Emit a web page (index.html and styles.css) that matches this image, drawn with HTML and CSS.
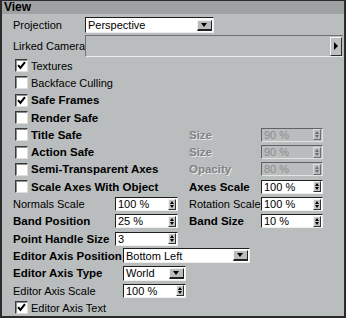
FILE: index.html
```html
<!DOCTYPE html>
<html lang="en">
<head>
    <meta charset="UTF-8">
    <title>View</title>
    <link rel="stylesheet" href="styles.css">
</head>
<body>
<div class="panel">
    <div class="title">View</div>
    <div class="body">
        <!-- Camera -->
        <div class="row top">
            <span class="lab-a">Projection</span>
            <div class="select proj"><span>Perspective</span><i class="drop"></i></div>
        </div>
        <div class="row linked">
            <span class="lab-a">Lirked Camera</span>
            <div class="link"><i class="go"></i></div>
        </div>

        <!-- Toggles -->
        <div class="row cb">
            <span class="box"><svg viewBox="0 0 10 10"><path d="M1.2 4.6 L3.8 7.6 L8.8 1.2"/></svg></span>
            <span>Textures</span>
        </div>
        <div class="row cb">
            <span class="box"></span>
            <span>Backface Culling</span>
        </div>
        <div class="row cb b">
            <span class="box"><svg viewBox="0 0 10 10"><path d="M1.2 4.6 L3.8 7.6 L8.8 1.2"/></svg></span>
            <span>Safe Frames</span>
        </div>
        <div class="row cb b">
            <span class="box"></span>
            <span>Render Safe</span>
        </div>
        <div class="row cb b">
            <div class="cb-left"><span class="box"></span><span>Title Safe</span></div>
            <span class="rlab off">Size</span>
            <div class="num off"><span>90 %</span><i class="spin"></i></div>
        </div>
        <div class="row cb b">
            <div class="cb-left"><span class="box"></span><span>Action Safe</span></div>
            <span class="rlab off">Size</span>
            <div class="num off"><span>90 %</span><i class="spin"></i></div>
        </div>
        <div class="row cb b">
            <div class="cb-left"><span class="box"></span><span>Semi-Transparent Axes</span></div>
            <span class="rlab off">Opacity</span>
            <div class="num off"><span>80 %</span><i class="spin"></i></div>
        </div>
        <div class="row cb b">
            <div class="cb-left"><span class="box"></span><span>Scale Axes With Object</span></div>
            <span class="rlab">Axes Scale</span>
            <div class="num"><span>100 %</span><i class="spin"></i></div>
        </div>

        <!-- Sizes -->
        <div class="row">
            <span class="lab-n">Normals Scale</span>
            <div class="num sm"><span>100 %</span><i class="spin"></i></div>
            <span class="rlab">Rotation Scale</span>
            <div class="num"><span>100 %</span><i class="spin"></i></div>
        </div>
        <div class="row b">
            <span class="lab-n">Band Position</span>
            <div class="num sm"><span>25 %</span><i class="spin"></i></div>
            <span class="rlab">Band Size</span>
            <div class="num"><span>10 %</span><i class="spin"></i></div>
        </div>
        <div class="row b">
            <span class="lab-n">Point Handle Size</span>
            <div class="num sm"><span>3</span><i class="spin"></i></div>
        </div>

        <!-- Editor axis -->
        <div class="row b">
            <span class="lab-e">Editor Axis Position</span>
            <div class="select pos"><span>Bottom Left</span><i class="drop"></i></div>
        </div>
        <div class="row b">
            <span class="lab-e">Editor Axis Type</span>
            <div class="select type"><span>World</span><i class="drop"></i></div>
        </div>
        <div class="row">
            <span class="lab-e">Editor Axis Scale</span>
            <div class="num ed"><span>100 %</span><i class="spin"></i></div>
        </div>
        <div class="row cb">
            <span class="box"><svg viewBox="0 0 10 10"><path d="M1.2 4.6 L3.8 7.6 L8.8 1.2"/></svg></span>
            <span>Editor Axis Text</span>
        </div>
    </div>
</div>
</body>
</html>
```

FILE: styles.css
```css
/* Base */
body {
    margin: 0;
    background: #fff;
    font-family: "Liberation Sans", Arial, sans-serif;
    font-size: 11px;
    color: #000;
}
.panel {
    width: 342px;
    height: 315px;
    border: solid #2b2b2b;
    border-width: 1px 2px 2px 2px;
    background: #b9bdbd;
}
.title {
    height: 13px;
    line-height: 13px;
    padding-left: 2px;
    background: #9ea2a2;
    font-weight: bold;
    font-size: 12px;
}
.body {
    padding-top: 3px;
}

/* Rows */
.row {
    display: flex;
    align-items: center;
    height: 17.3px;
    padding-left: 11px;
    white-space: nowrap;
}
.row.b {
    font-weight: bold;
    font-size: 11.5px;
}
.row.cb {
    padding-left: 13px;
}
.row.top {
    height: 16px;
}
.row.linked {
    height: 22px;
    margin-top: 2px;
}
.lab-a {
    width: 72px;
}
.lab-n {
    width: 102px;
}
.lab-e {
    width: 110px;
}
.cb-left {
    display: flex;
    align-items: center;
    width: 174px;
}
.rlab {
    width: 72px;
}
.rlab.off {
    color: #7f8383;
    text-shadow: 1px 1px 0 #e6e8e8;
}

/* Checkbox */
.box {
    box-sizing: border-box;
    width: 13px;
    height: 13px;
    margin-right: 3px;
    padding: 1px;
    background: #fff;
    border: 1px solid;
    border-color: #3a3a3a #dcdede #dcdede #3a3a3a;
    box-shadow: inset 1px 1px 0 #8a8e8e;
}
.box svg {
    display: block;
    width: 9px;
    height: 9px;
    fill: none;
    stroke: #000;
    stroke-width: 2.3;
}

/* Number fields */
.num {
    box-sizing: border-box;
    display: flex;
    align-items: center;
    justify-content: space-between;
    width: 62px;
    height: 14px;
    padding: 0 1px 0 2px;
    background: #fff;
    border: 1px solid;
    border-color: #1e1e1e #eef0f0 #eef0f0 #1e1e1e;
    font-weight: normal;
    font-size: 11px;
}
.num.sm {
    width: 63px;
    margin-right: 11px;
}
.num.ed {
    width: 63px;
}
.num.off {
    background: #b9bdbd;
    border-color: #5e6262 #e2e4e4 #e2e4e4 #5e6262;
    color: #8a8e8e;
}
.spin {
    position: relative;
    box-sizing: border-box;
    width: 8px;
    height: 11px;
    background: #c2c6c6;
    border: 1px solid;
    border-color: #f4f4f4 #303030 #303030 #f4f4f4;
}
.spin::before,
.spin::after {
    content: "";
    position: absolute;
    left: 1px;
    border-left: 2px solid transparent;
    border-right: 2px solid transparent;
}
.spin::before {
    top: 1px;
    border-bottom: 3px solid #000;
}
.spin::after {
    bottom: 1px;
    border-top: 3px solid #000;
}
.num.off .spin {
    background: #b9bdbd;
    border-color: #dcdede #6a6e6e #6a6e6e #dcdede;
}
.num.off .spin::before {
    border-bottom-color: #6a6e6e;
}
.num.off .spin::after {
    border-top-color: #6a6e6e;
}

/* Dropdowns */
.select {
    box-sizing: border-box;
    display: flex;
    align-items: center;
    justify-content: space-between;
    height: 15px;
    padding: 0 1px 0 2px;
    background: #fff;
    border: 1px solid;
    border-color: #1e1e1e #eef0f0 #eef0f0 #1e1e1e;
    font-weight: normal;
    font-size: 11px;
}
.select.proj {
    width: 129px;
    height: 16px;
}
.select.pos {
    width: 127px;
}
.select.type {
    width: 63px;
}
.drop {
    position: relative;
    box-sizing: border-box;
    width: 15px;
    height: 11px;
    background: #b9bdbd;
    border: 1px solid;
    border-color: #f4f4f4 #202020 #202020 #f4f4f4;
    border-bottom-width: 2px;
}
.drop::after {
    content: "";
    position: absolute;
    left: 3px;
    top: 2px;
    border-left: 3.5px solid transparent;
    border-right: 3.5px solid transparent;
    border-top: 4px solid #000;
}

/* Linked camera */
.link {
    box-sizing: border-box;
    display: flex;
    align-items: center;
    justify-content: flex-end;
    width: 258px;
    height: 22px;
    padding-right: 1px;
    border-top: 1px solid #6e7272;
    border-left: 1px solid #6e7272;
    border-bottom: 1px solid #eceeee;
}
.go {
    position: relative;
    box-sizing: border-box;
    width: 12px;
    height: 19px;
    background: #bcc0c0;
    border: 1px solid;
    border-color: #f4f4f4 #303030 #303030 #f4f4f4;
}
.go::after {
    content: "";
    position: absolute;
    left: 3px;
    top: 4px;
    border-top: 4px solid transparent;
    border-bottom: 4px solid transparent;
    border-left: 4px solid #000;
}
```
